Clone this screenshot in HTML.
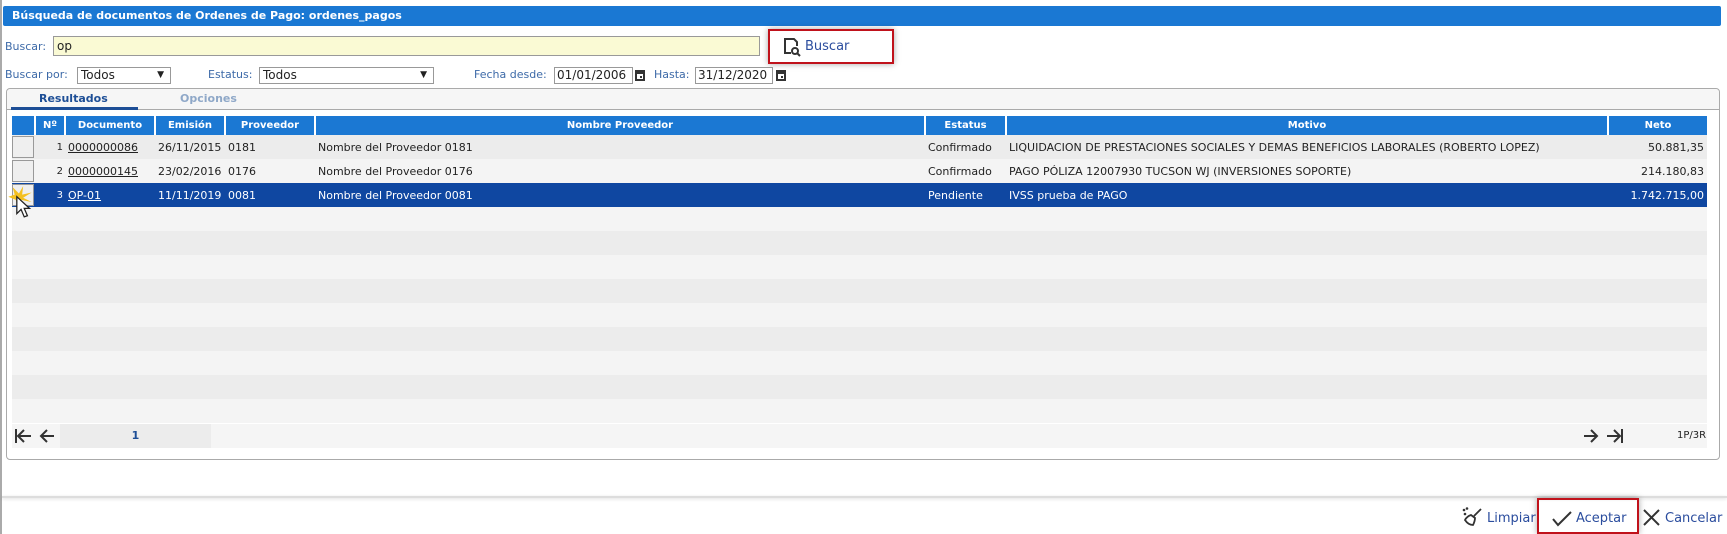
<!DOCTYPE html>
<html><head><meta charset="utf-8"><style>
*{margin:0;padding:0;box-sizing:border-box}
body{width:1727px;height:534px;background:#fff;position:relative;overflow:hidden;font-family:"DejaVu Sans","Liberation Sans",sans-serif;font-size:11px;color:#222}
.a{position:absolute;white-space:nowrap}
.lbl{color:#3d6aa8;font-size:11px}
.inp{position:absolute;border:1px solid #999;background:#fff;font-size:12px;padding-left:3px;line-height:15px}
table{position:absolute;left:12px;top:116px;width:1695px;border-collapse:collapse;table-layout:fixed}
th{background:#1b78d3;color:#fff;font-weight:bold;font-size:10px;height:19px;border-left:2px solid #fff;text-align:center}
th:first-child{border-left:none}
td{height:24px;white-space:nowrap;overflow:hidden;padding:0 3px}
tr.d td{background:#ececec}tr.l td{background:#f4f4f4}
tr.s td{background:#0f47a1;color:#fff}
.cb{padding:0}
.cb div{width:22px;height:22px;border:1px solid #999;background:#efefef}
u{text-decoration:underline}
</style></head><body>
<div class="a" style="left:0;top:0;width:2px;height:534px;background:#aaa"></div>
<div class="a" style="left:3px;top:6px;width:1718px;height:20px;background:#1a78d3;color:#fff;font-weight:bold;font-size:11px;line-height:20px;padding-left:9px;border-radius:2px">Búsqueda de documentos de Ordenes de Pago: ordenes_pagos</div>

<div class="a lbl" style="left:5px;top:40px">Buscar:</div>
<div class="inp" style="left:53px;top:36px;width:707px;height:20px;background:#fafad4;line-height:18px">op</div>
<div class="a" style="left:768px;top:29px;width:126px;height:35px;border:2px solid #c0121b;box-shadow:0 0 6px rgba(0,0,0,.35)"></div>
<svg class="a" style="left:782px;top:37px" width="20" height="20" viewBox="0 0 20 20"><path d="M9 16H3V2h9l3 3v4" fill="none" stroke="#333" stroke-width="2"/><circle cx="13" cy="14" r="3" fill="none" stroke="#333" stroke-width="2"/><path d="M15 16l3 3" stroke="#333" stroke-width="2"/></svg>
<div class="a" style="left:805px;top:39px;font-size:13px;color:#2b4d9e">Buscar</div>

<div class="a lbl" style="left:5px;top:68px">Buscar por:</div>
<div class="inp" style="left:77px;top:67px;width:94px;height:17px;font-size:12px">Todos<span style="position:absolute;right:6px;font-size:9px">▼</span></div>
<div class="a lbl" style="left:208px;top:68px">Estatus:</div>
<div class="inp" style="left:259px;top:67px;width:175px;height:17px;font-size:12px">Todos<span style="position:absolute;right:6px;font-size:9px">▼</span></div>
<div class="a lbl" style="left:474px;top:68px">Fecha desde:</div>
<div class="inp" style="left:554px;top:67px;width:79px;height:17px;padding-left:2px">01/01/2006</div>
<svg class="a" style="left:635px;top:69px" width="10" height="12"><rect x="0" y="1" width="10" height="11" fill="#333"/><rect x="2" y="5" width="6" height="5" fill="#fff"/><rect x="5" y="7" width="2" height="2" fill="#333"/></svg>
<div class="a lbl" style="left:654px;top:68px">Hasta:</div>
<div class="inp" style="left:695px;top:67px;width:78px;height:17px;padding-left:2px">31/12/2020</div>
<svg class="a" style="left:776px;top:69px" width="10" height="12"><rect x="0" y="1" width="10" height="11" fill="#333"/><rect x="2" y="5" width="6" height="5" fill="#fff"/><rect x="5" y="7" width="2" height="2" fill="#333"/></svg>

<div class="a" style="left:6px;top:88px;width:1714px;height:372px;border:1px solid #aaa;border-radius:4px;background:#fff"></div>
<div class="a" style="left:7px;top:89px;width:1712px;height:21px;background:#f6f6f6;border-bottom:1px solid #aaa;border-radius:4px 4px 0 0"></div>
<div class="a" style="left:39px;top:92px;font-weight:bold;color:#1d4e96">Resultados</div>
<div class="a" style="left:11px;top:107px;width:127px;height:3px;background:#1d4e96"></div>
<div class="a" style="left:180px;top:92px;font-weight:bold;color:#8fa8c8">Opciones</div>

<table>
<colgroup><col style="width:23px"><col style="width:30px"><col style="width:90px"><col style="width:70px"><col style="width:90px"><col style="width:610px"><col style="width:81px"><col style="width:602px"><col style="width:99px"></colgroup>
<tr><th></th><th>Nº</th><th>Documento</th><th>Emisión</th><th>Proveedor</th><th>Nombre Proveedor</th><th>Estatus</th><th>Motivo</th><th>Neto</th></tr>
<tr class="d"><td class="cb"><div></div></td><td style="text-align:right;font-size:10px;padding-right:2px">1</td><td><u>0000000086</u></td><td>26/11/2015</td><td>0181</td><td>Nombre del Proveedor 0181</td><td>Confirmado</td><td>LIQUIDACION DE PRESTACIONES SOCIALES Y DEMAS BENEFICIOS LABORALES (ROBERTO LOPEZ)</td><td style="text-align:right">50.881,35</td></tr>
<tr class="l"><td class="cb"><div></div></td><td style="text-align:right;font-size:10px;padding-right:2px">2</td><td><u>0000000145</u></td><td>23/02/2016</td><td>0176</td><td>Nombre del Proveedor 0176</td><td>Confirmado</td><td>PAGO PÓLIZA 12007930 TUCSON WJ (INVERSIONES SOPORTE)</td><td style="text-align:right">214.180,83</td></tr>
<tr class="s"><td class="cb"><div></div></td><td style="text-align:right;font-size:10px;padding-right:2px">3</td><td><u>OP-01</u></td><td>11/11/2019</td><td>0081</td><td>Nombre del Proveedor 0081</td><td>Pendiente</td><td>IVSS prueba de PAGO</td><td style="text-align:right">1.742.715,00</td></tr>
<tr class="l"><td colspan="9"></td></tr><tr class="d"><td colspan="9"></td></tr><tr class="l"><td colspan="9"></td></tr><tr class="d"><td colspan="9"></td></tr><tr class="l"><td colspan="9"></td></tr><tr class="d"><td colspan="9"></td></tr><tr class="l"><td colspan="9"></td></tr><tr class="d"><td colspan="9"></td></tr><tr class="l"><td colspan="9"></td></tr>
</table>
<svg class="a" style="left:6px;top:184px" width="28" height="36" viewBox="0 0 26 34"><path d="M2 12L8 10 6 3 12 9 16 2 15 10 24 8 16 13 24 17 14 15 12 24 9 15 2 12Z" fill="#f4c020"/><path d="M10 12L10 28 14 24 17 31 20 30 17 23 22 23Z" fill="#fff" stroke="#222" stroke-width="1.2"/></svg>

<div class="a" style="left:12px;top:424px;width:1695px;height:24px;background:#f5f5f5"></div>
<div class="a" style="left:60px;top:424px;width:151px;height:24px;background:#ececec;text-align:center;font-weight:bold;color:#1d4e96;line-height:24px;font-size:11px">1</div>
<svg class="a" style="left:14px;top:428px" width="42" height="16" viewBox="0 0 42 16"><g fill="none" stroke="#333" stroke-width="2"><path d="M2 1v14M17 8H4M10 2L4 8l6 6"/><path d="M40 8H27M33 2l-6 6 6 6"/></g></svg>
<svg class="a" style="left:1582px;top:428px" width="42" height="16" viewBox="0 0 42 16"><g fill="none" stroke="#333" stroke-width="2"><path d="M2 8h13M9 2l6 6-6 6"/><path d="M40 1v14M25 8h13M32 2l6 6-6 6"/></g></svg>
<div class="a" style="left:1677px;top:430px;font-size:10px">1P/3R</div>

<div class="a" style="left:2px;top:496px;width:1725px;height:2px;background:#ddd;box-shadow:0 1px 3px rgba(0,0,0,.15)"></div>
<svg class="a" style="left:1462px;top:507px" width="20" height="20" viewBox="0 0 20 20"><circle cx="2" cy="3" r="1.3" fill="#333"/><circle cx="5" cy="1.5" r="1.3" fill="#333"/><circle cx="3" cy="7" r="1.3" fill="#333"/><path d="M19 2l-7 7M9 8c-3 1-5 3-6 5 2 3 5 5 8 5 1-2 2-5 2-7z" fill="none" stroke="#333" stroke-width="1.8"/></svg>
<div class="a" style="left:1487px;top:511px;font-size:13px;color:#2b4d9e">Limpiar</div>
<div class="a" style="left:1537px;top:498px;width:102px;height:36px;border:2px solid #c0121b;box-shadow:0 0 6px rgba(0,0,0,.35)"></div>
<svg class="a" style="left:1552px;top:511px" width="20" height="16" viewBox="0 0 20 16"><path d="M1 8l5 6L19 1" fill="none" stroke="#333" stroke-width="2"/></svg>
<div class="a" style="left:1576px;top:511px;font-size:13px;color:#2b4d9e">Aceptar</div>
<svg class="a" style="left:1643px;top:509px" width="17" height="17" viewBox="0 0 17 17"><path d="M1 1l15 15M16 1L1 16" stroke="#333" stroke-width="2"/></svg>
<div class="a" style="left:1665px;top:511px;font-size:13px;color:#2b4d9e">Cancelar</div>
</body></html>
